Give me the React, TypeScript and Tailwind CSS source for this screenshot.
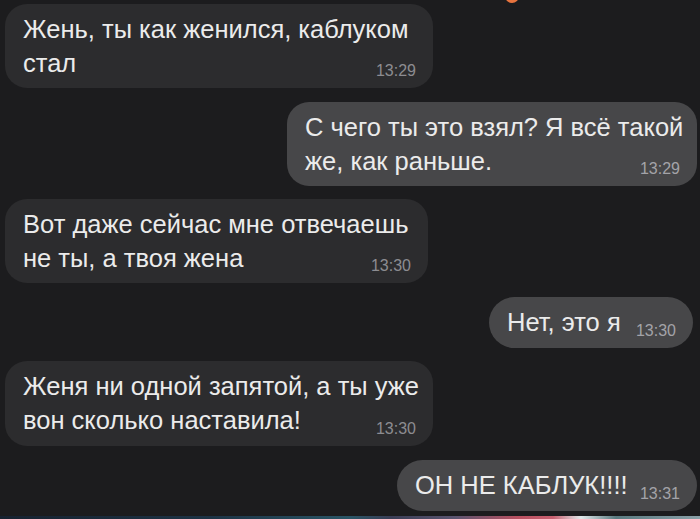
import React from "react";

const font = { fontFamily: '"Liberation Sans", Arial, sans-serif' };

function Time({ t, out }: { t: string; out?: boolean }) {
  return (
    <span
      className={`absolute right-[17px] bottom-[9px] text-[16px] leading-none ${out ? "text-[#a3a3a8]" : "text-[#8c8c91]"}`}
    >
      {t}
    </span>
  );
}

function Bubble({
  out,
  className,
  time,
  children,
}: {
  out?: boolean;
  className: string;
  time: string;
  children: React.ReactNode;
}) {
  return (
    <div
      className={`relative pl-[18px] pt-[8px] text-[25.5px] leading-[34px] ${out ? "self-end bg-[#474749]" : "self-start bg-[#2c2c2e]"} ${className}`}
    >
      {children}
      <Time t={time} out={out} />
    </div>
  );
}

export default function App() {
  return (
    <div
      className="relative w-[700px] h-[519px] overflow-hidden bg-[#1c1c1e] text-[#ebebeb]"
      style={font}
    >
      <div className="absolute left-[505px] top-[-11px] w-[14px] h-[14px] rounded-full bg-[#e8743f]" />
      <div className="flex flex-col gap-[13.5px] pt-[4px] pl-[5px] pr-[3px]">
        <Bubble time="13:29" className="w-[428px] h-[84px] rounded-[22px]">
          Жень, ты как женился, каблуком
          <br />
          стал
        </Bubble>
        <Bubble out time="13:29" className="w-[410px] h-[84px] rounded-[22px]">
          С чего ты это взял? Я всё такой
          <br />
          же, как раньше.
        </Bubble>
        <Bubble time="13:30" className="w-[423px] h-[84px] rounded-[22px]">
          Вот даже сейчас мне отвечаешь
          <br />
          не ты, а твоя жена
        </Bubble>
        <Bubble out time="13:30" className="w-[204px] h-[51px] rounded-[26px] mr-[4px]">
          Нет, это я
        </Bubble>
        <Bubble time="13:30" className="w-[428px] h-[85px] rounded-[22px]">
          Женя ни одной запятой, а ты уже
          <br />
          вон сколько наставила!
        </Bubble>
        <Bubble out time="13:31" className="w-[300px] h-[51px] rounded-[26px]">
          ОН НЕ КАБЛУК!!!!
        </Bubble>
      </div>
      <div className="absolute left-0 bottom-0 w-[700px] h-[3px] bg-[linear-gradient(90deg,#172230_0%,#1d3345_30%,#2a5566_50%,#3a3d55_56%,#5a5570_65%,#b85060_74%,#c86070_79%,#e0e8ea_83%,#5a7a80_88%,#8aa0a8_100%)]" />
    </div>
  );
}
